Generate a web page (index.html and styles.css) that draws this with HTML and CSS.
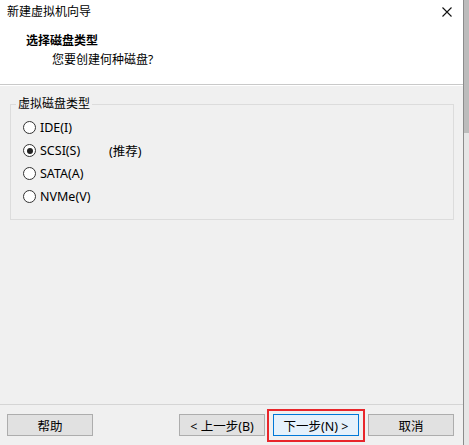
FILE: index.html
```html
<!DOCTYPE html>
<html lang="zh-CN">
<head>
    <meta charset="UTF-8">
    <title>新建虚拟机向导</title>
    <link rel="stylesheet" href="styles.css">
</head>
<body>

<div class="window">
    <div class="wizard">
        <div class="header">
            <div class="titlebar">
                <span class="title">新建虚拟机向导</span>
                <svg class="close" width="10" height="10" viewBox="0 0 10 10">
                    <path d="M0.5 0.5 L9.5 9.5 M9.5 0.5 L0.5 9.5" stroke="#111" stroke-width="1.1" fill="none"/>
                </svg>
            </div>
            <div class="heading">选择磁盘类型</div>
            <div class="subheading">您要创建何种磁盘?</div>
        </div>

        <div class="content">
            <fieldset class="group">
                <legend>虚拟磁盘类型</legend>
                <div class="option"><span class="radio"></span><span class="label">IDE(I)</span></div>
                <div class="option"><span class="radio checked"></span><span class="label">SCSI(S)</span><span class="note">(推荐)</span></div>
                <div class="option"><span class="radio"></span><span class="label">SATA(A)</span></div>
                <div class="option"><span class="radio"></span><span class="label">NVMe(V)</span></div>
            </fieldset>
        </div>

        <div class="footer">
            <button class="btn">帮助</button>
            <div class="spacer"></div>
            <button class="btn">&lt; 上一步(B)</button>
            <span class="highlight"><button class="btn default">下一步(N) &gt;</button></span>
            <button class="btn">取消</button>
        </div>
    </div>
    <div class="scrollbar"><div class="thumb"></div></div>
</div>

</body>
</html>
```

FILE: styles.css
```css
* {
    box-sizing: border-box;
}

body {
    margin: 0;
    font-family: "Noto Sans", "Noto Sans CJK SC", sans-serif;
    font-size: 12px;
    color: #000;
    background: #f0f0f0;
}

.window {
    display: flex;
    width: 469px;
    height: 445px;
}

.wizard {
    display: flex;
    flex-direction: column;
    width: 463px;
    height: 445px;
    background: #f0f0f0;
}

.header {
    height: 85px;
    background: #fff;
    border-bottom: 1px solid #c9c9c9;
}

.titlebar {
    display: flex;
    justify-content: space-between;
    align-items: center;
    height: 23px;
    padding: 0 11px 0 7px;
}

.title {
    line-height: 23px;
}

.heading {
    margin-top: 9px;
    padding-left: 26px;
    font-weight: bold;
    line-height: 18px;
}

.subheading {
    margin-top: 1px;
    padding-left: 52px;
    line-height: 18px;
}

.content {
    flex: 1;
    border-top: 1px solid #fff;
}

.group {
    margin: 11px 9px 0 10px;
    padding: 5px 12px 11px 12px;
    border: 1px solid #dcdcdc;
    border-radius: 0;
}

.group legend {
    margin-left: -7px;
    padding: 0 2px;
    line-height: 14px;
}

.option {
    display: flex;
    align-items: center;
    height: 23px;
    font-size: 12.5px;
}

.radio {
    position: relative;
    width: 13px;
    height: 13px;
    border: 1px solid #333;
    border-radius: 50%;
    background: #fff;
    margin-right: 4px;
}

.radio.checked::after {
    content: "";
    position: absolute;
    left: 2.5px;
    top: 2.5px;
    width: 6px;
    height: 6px;
    border-radius: 50%;
    background: #222;
}

.label {
    width: 69px;
}

.footer {
    display: flex;
    align-items: flex-start;
    height: 41px;
    padding: 9px 9px 0 7px;
    border-top: 1px solid #d5d5d5;
    gap: 8px;
}

.spacer {
    flex: 1;
}

.btn {
    width: 86px;
    height: 22px;
    padding: 0;
    font-family: inherit;
    font-size: 12.5px;
    color: #000;
    background: #e1e1e1;
    border: 1px solid #adadad;
}

.btn.default {
    background: #e5f1fb;
    border: 1px solid #0078d7;
}

.highlight {
    position: relative;
    display: block;
    height: 22px;
    margin-right: 1px;
}

.highlight::after {
    content: "";
    position: absolute;
    left: -6px;
    right: -6px;
    top: -5px;
    bottom: -6px;
    border: 2px solid #e8262b;
}

.scrollbar {
    width: 6px;
    height: 445px;
    border-left: 1px solid #8c8c8c;
    background: #e6e6e6;
}

.thumb {
    height: 133px;
    background: #bcbcbc;
}
```
